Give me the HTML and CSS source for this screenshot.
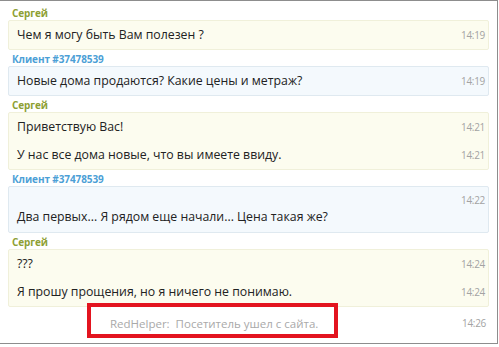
FILE: index.html
```html
<!DOCTYPE html>
<html lang="ru">
<head>
<meta charset="utf-8">
<link rel="stylesheet" href="styles.css">
</head>
<body>
<div class="chat">
  <div class="author author--op">Сергей</div>
  <div class="bubble bubble--op">
    <div class="row"><span class="text">Чем я могу быть Вам полезен ?</span><span class="time">14:19</span></div>
  </div>

  <div class="author author--client">Клиент #37478539</div>
  <div class="bubble bubble--client">
    <div class="row"><span class="text">Новые дома продаются? Какие цены и метраж?</span><span class="time">14:19</span></div>
  </div>

  <div class="author author--op">Сергей</div>
  <div class="bubble bubble--op">
    <div class="row"><span class="text">Приветствую Вас!</span><span class="time">14:21</span></div>
    <div class="row"><span class="text">У нас все дома новые, что вы имеете ввиду.</span><span class="time">14:21</span></div>
  </div>

  <div class="author author--client">Клиент #37478539</div>
  <div class="bubble bubble--client">
    <div class="row row--wrap"><span class="time">14:22</span><span class="text">Два первых... Я рядом еще начали... Цена такая же?</span></div>
  </div>

  <div class="author author--op">Сергей</div>
  <div class="bubble bubble--op">
    <div class="row"><span class="text">???</span><span class="time">14:24</span></div>
    <div class="row"><span class="text">Я прошу прощения, но я ничего не понимаю.</span><span class="time">14:24</span></div>
  </div>

  <div class="system">
    <span class="system-text">RedHelper:&nbsp; Посетитель ушел с сайта.</span>
    <span class="time">14:26</span>
    <span class="highlight"></span>
  </div>
</div>
</body>
</html>
```

FILE: styles.css
```css
html, body {
  margin: 0;
  padding: 0;
  background: #ffffff;
}

body {
  font-family: "Open Sans", "Noto Sans", "DejaVu Sans", sans-serif;
  color: #222222;
}

.chat {
  box-sizing: border-box;
  width: 498px;
  height: 344px;
  border-top: 1px solid #8d8d8d;
  border-right: 1px solid #8d8d8d;
  border-bottom: 1px solid #8d8d8d;
  padding: 5px 8px 0 8px;
  overflow: hidden;
}

.author {
  font-size: 10px;
  font-weight: 700;
  line-height: 14px;
  padding-left: 4px;
  margin-top: 2px;
  letter-spacing: -0.1px;
}

.author:first-child {
  margin-top: 0;
}

.author--op {
  color: #8e9f34;
}

.author--client {
  color: #4c9fd6;
}

.bubble {
  border: 1px solid #efefd9;
  border-radius: 2px;
}

.bubble--op {
  background: #fcfcef;
  border-color: #f0f0da;
}

.bubble--client {
  background: #f4f9fd;
  border-color: #dfe9f0;
}

.row {
  display: flex;
  justify-content: space-between;
  align-items: center;
  height: 28px;
  padding: 0 3px 0 8px;
}

.row--wrap {
  flex-direction: column;
  align-items: stretch;
  justify-content: flex-start;
  height: auto;
  padding-top: 6px;
  padding-bottom: 7px;
}

.row--wrap .time {
  align-self: flex-end;
  line-height: 14px;
}

.row--wrap .text {
  margin-top: 2px;
  line-height: 16px;
}

.text {
  font-size: 12.3px;
  line-height: 16px;
  white-space: nowrap;
}

.time {
  font-size: 10px;
  color: #a3a3a3;
  letter-spacing: -0.3px;
}

.system {
  position: relative;
  display: flex;
  justify-content: space-between;
  align-items: center;
  height: 32px;
  padding: 0 3px 0 102px;
}

.system-text {
  font-size: 11.5px;
  color: #a9a9a9;
  white-space: nowrap;
}

.highlight {
  position: absolute;
  left: 79px;
  top: -4px;
  width: 243px;
  height: 27px;
  border: 4px solid #e3141f;
}
```
